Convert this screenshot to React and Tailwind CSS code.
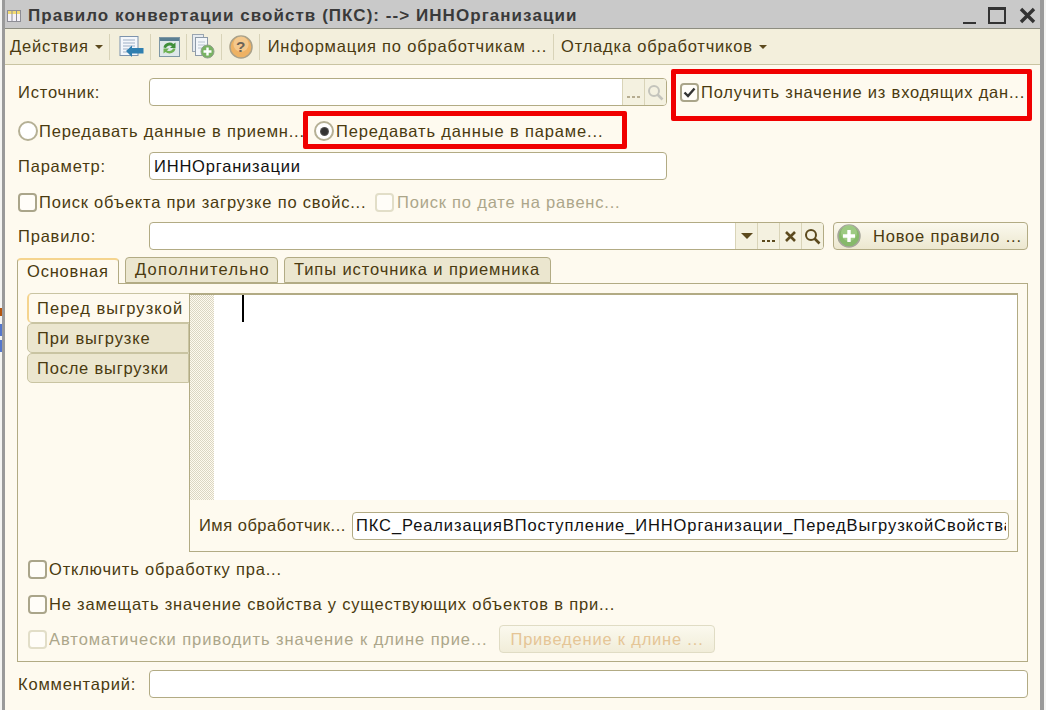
function Sep() {
  return <div className="w-px h-[26px] shrink-0 bg-[#d8d3b8] mx-[6px]"></div>;
}

function Caret({ className = "" }) {
  return <span className={"w-0 h-0 border-x-[4px] border-x-transparent border-t-[4px] border-t-[#5c4a1e] " + className}></span>;
}

function Check({ checked, disabled, className = "" }) {
  return (
    <span className={"w-[19px] h-[19px] shrink-0 rounded-[4px] border-2 bg-[#fffdf8] flex items-center justify-center " + (disabled ? "border-[#e2dec8]" : "border-[#aaa58a]") + " " + className}>
      {checked && (
        <svg width="13" height="11" viewBox="0 0 13 11">
          <path d="M1.5 5.5 L5 9 L11.5 1.5" fill="none" stroke="#333" strokeWidth="2.4" />
        </svg>
      )}
    </span>
  );
}

function Radio({ checked }) {
  return (
    <span className="w-[20px] h-[20px] shrink-0 rounded-full border-2 border-[#b5b095] bg-white flex items-center justify-center">
      {checked && <span className="w-[9px] h-[9px] rounded-full bg-[radial-gradient(circle,#333_45%,#8b8b8b_100%)]"></span>}
    </span>
  );
}

function Field({ className = "", children }) {
  return (
    <div className={"h-[28px] bg-white border border-[#b2ab84] rounded-[4px] flex items-center overflow-hidden " + className}>
      {children}
    </div>
  );
}

function FieldBtn({ children }) {
  return (
    <div className="w-[22px] h-full shrink-0 bg-[#f4f1e0] border-l border-[#d9d4b8] flex items-center justify-center">
      {children}
    </div>
  );
}

function Dots({ light }) {
  return (
    <span className={"flex gap-[2px] mt-[10px] " + (light ? "opacity-40" : "")}>
      <i className="w-[3px] h-[2px] bg-[#5c4a1e]"></i>
      <i className="w-[3px] h-[2px] bg-[#5c4a1e]"></i>
      <i className="w-[3px] h-[2px] bg-[#5c4a1e]"></i>
    </span>
  );
}

function Lens({ color }) {
  return (
    <svg width="17" height="17" viewBox="0 0 17 17">
      <circle cx="7" cy="7" r="5" fill="none" stroke={color} strokeWidth="2" />
      <path d="M10.5 10.5 L15.5 15.5" stroke={color} strokeWidth="2.6" />
    </svg>
  );
}

function GreenPlus({ size }) {
  return (
    <svg width={size} height={size} viewBox="0 0 24 24">
      <circle cx="12" cy="12" r="11" fill="#86b96a" stroke="#a5a59a" strokeWidth="1.5" />
      <circle cx="12" cy="9" r="8" fill="#a7d28d" opacity="0.7" />
      <path d="M12 6 V18 M6 12 H18" stroke="#fff" strokeWidth="3.4" />
    </svg>
  );
}

export default function App() {
  return (
    <div className="relative w-[1046px] h-[710px] flex bg-white overflow-hidden font-['Liberation_Sans',sans-serif] text-[16.5px] tracking-[0.8px] text-[#4a3a10]">
      <div className="w-[2px] shrink-0 bg-[#f4f4f2] flex flex-col">
        <div className="h-[308px]"></div>
        <div className="h-[8px] bg-[#b5560f]"></div>
        <div className="h-[8px]"></div>
        <div className="h-[12px] bg-[#5577cc]"></div>
        <div className="h-[4px]"></div>
        <div className="h-[12px] bg-[#5577cc]"></div>
      </div>
      <div className="w-[3px] shrink-0 bg-[#9a9a9a]"></div>

      <div className="w-[1035px] shrink-0 flex flex-col bg-[#fefaef]">
        <div className="h-[28px] shrink-0 bg-[#c9c9c9] flex items-center pl-[2px] pt-[3px]">
          <svg width="14" height="12" viewBox="0 0 14 12" className="mr-[7px] shrink-0">
            <rect x="0.5" y="0.5" width="13" height="11" fill="#f4f1f8" stroke="#8d8d95" />
            <rect x="1" y="1" width="12" height="3" fill="#f2da72" />
            <path d="M5 1 V11 M9.5 1 V11" stroke="#8d8d95" />
          </svg>
          <span className="text-[17px] font-bold tracking-[1.05px] text-[#3a3a3a] whitespace-nowrap">Правило конвертации свойств (ПКС): --&gt; ИННОрганизации</span>
          <div className="ml-auto flex items-center">
            <span className="w-[13px] h-[2px] bg-[#333] mt-[14px] mr-[12px]"></span>
            <span className="w-[18px] h-[17px] border-2 border-t-[3px] border-[#333] mr-[13px]"></span>
            <svg width="17" height="17" viewBox="0 0 17 17" className="mr-[4px]">
              <path d="M2 2 L15 15 M15 2 L2 15" stroke="#333" strokeWidth="3.4" />
            </svg>
          </div>
        </div>

        <div className="h-[37px] shrink-0 bg-[#f3efdc] border-t border-[#8d8d80] border-b border-b-[#c9c4a2] flex items-center pl-[5px]">
          <span>Действия</span>
          <Caret className="ml-[6px]" />
          <Sep />
          <svg width="25" height="24" viewBox="0 0 25 24" className="ml-[3px] shrink-0">
            <rect x="1" y="1.5" width="18" height="19" fill="#f4f7fb" stroke="#7c93ad" />
            <path d="M4 5 H16 M4 8 H16 M4 11 H16 M4 14 H9 M4 17 H9" stroke="#9db0c6" strokeWidth="1.2" />
            <path d="M24.5 13 V18.5 H13 V22 L7 16 L13 10.5 V13 Z" fill="#2f7fb0" />
          </svg>
          <Sep />
          <svg width="21" height="20" viewBox="0 0 21 20" className="ml-[2px] shrink-0">
            <rect x="0.5" y="0.5" width="20" height="19" fill="#dfe8ea" stroke="#7e97a5" />
            <rect x="1" y="1" width="19" height="3" fill="#5a7f92" />
            <path d="M4.5 10.5 A6 5.5 0 0 1 14.5 7 L16.5 5.5 V11 H11 L13 9 A4 3.5 0 0 0 7 11 Z" fill="#3f8f3a" />
            <path d="M16.5 11.5 A6 5.5 0 0 1 6.5 15 L4.5 16.5 V11.5 H10 L8 13.5 A4 3.5 0 0 0 14 11.5 Z" fill="#6fb255" />
          </svg>
          <Sep />
          <svg width="23" height="25" viewBox="0 0 23 25" className="ml-[-1px] shrink-0">
            <rect x="0.5" y="0.5" width="11" height="17" fill="#e6ebf0" stroke="#9aa5b0" />
            <rect x="3.5" y="3.5" width="12" height="18" fill="#f3f6f9" stroke="#8d9aa8" />
            <path d="M6 8 H13 M6 11 H13 M6 14 H10" stroke="#b8c4d0" />
            <circle cx="15.5" cy="17.5" r="6.5" fill="#79b362" stroke="#8fa08a" />
            <path d="M15.5 13.5 V21.5 M11.5 17.5 H19.5" stroke="#fff" strokeWidth="2.4" />
          </svg>
          <Sep />
          <svg width="24" height="24" viewBox="0 0 25 25" className="ml-[1px] shrink-0">
            <circle cx="12.5" cy="12.5" r="11.5" fill="#eeb264" stroke="#a9a18a" strokeWidth="1.5" />
            <circle cx="12.5" cy="9.5" r="8" fill="#f6d29c" opacity="0.7" />
            <text x="12.5" y="18" textAnchor="middle" fontSize="16" fontWeight="700" fontFamily="Liberation Sans" fill="#6b6358">?</text>
          </svg>
          <Sep />
          <span className="ml-[2px] whitespace-nowrap">Информация по обработчикам ...</span>
          <Sep />
          <span className="ml-[1px] whitespace-nowrap">Отладка обработчиков</span>
          <Caret className="ml-[6px]" />
        </div>

        <div className="flex-1 flex flex-col pl-[13px]">
          <div className="flex items-center mt-[13px] h-[28px]">
            <span className="w-[131px]">Источник:</span>
            <Field className="w-[518px] justify-end">
              <FieldBtn><Dots light /></FieldBtn>
              <FieldBtn><Lens color="#c4c4bc" /></FieldBtn>
            </Field>
            <Check checked className="ml-[13px]" />
            <span className="ml-[2px] whitespace-nowrap">Получить значение из входящих дан...</span>
          </div>

          <div className="flex items-center mt-[14px] h-[22px]">
            <Radio />
            <span className="ml-px w-[275px] whitespace-nowrap overflow-hidden">Передавать данные в приемн...</span>
            <Radio checked />
            <span className="ml-[2px] tracking-[0.85px] whitespace-nowrap">Передавать данные в параме...</span>
          </div>

          <div className="flex items-center mt-[10px] h-[28px]">
            <span className="w-[131px]">Параметр:</span>
            <Field className="w-[518px] pl-[4px] text-[#111]">ИННОрганизации</Field>
          </div>

          <div className="flex items-center mt-[12px] h-[20px]">
            <Check />
            <span className="ml-[2px] w-[336px] whitespace-nowrap">Поиск объекта при загрузке по свойс...</span>
            <Check disabled />
            <span className="ml-[3px] text-[#aca68a] whitespace-nowrap">Поиск по дате на равенс...</span>
          </div>

          <div className="flex items-center mt-[10px] h-[28px]">
            <span className="w-[131px]">Правило:</span>
            <Field className="w-[675px] justify-end">
              <FieldBtn><Caret className="!border-x-[6px] !border-t-[6px]" /></FieldBtn>
              <FieldBtn><Dots /></FieldBtn>
              <FieldBtn>
                <svg width="13" height="13" viewBox="0 0 13 13"><path d="M2 2 L11 11 M11 2 L2 11" stroke="#5c4a1e" strokeWidth="2.6" /></svg>
              </FieldBtn>
              <FieldBtn><Lens color="#5c4a1e" /></FieldBtn>
            </Field>
            <div className="ml-[9px] w-[195px] h-[28px] rounded-[4px] border border-[#b2ab84] bg-gradient-to-b from-[#fbf9ee] to-[#ece7cf] flex items-center pl-[3px]">
              <GreenPlus size={24} />
              <span className="ml-[12px] whitespace-nowrap">Новое правило ...</span>
            </div>
          </div>

          <div className="flex items-end mt-[7px] h-[26px] -ml-[1px]">
            <div className="w-[102px] h-[26px] mb-[-1px] pb-[2px] z-10 rounded-t-[4px] border border-b-0 border-[#b2ab84] border-t-2 border-t-[#f5d48e] bg-[#fefaef] pl-[9px] flex items-center">Основная</div>
            <div className="ml-[6px] w-[153px] h-[26px] pb-[2px] rounded-t-[4px] border border-[#b2ab84] bg-[#ebe6cf] pl-[9px] flex items-center tracking-[1.25px] whitespace-nowrap">Дополнительно</div>
            <div className="ml-[6px] w-[267px] h-[26px] pb-[2px] rounded-t-[4px] border border-[#b2ab84] bg-[#ebe6cf] pl-[9px] flex items-center tracking-[0.9px] whitespace-nowrap">Типы источника и приемника</div>
          </div>

          <div className="-ml-[1px] w-[1011px] h-[379px] shrink-0 border border-[#b2ab84] pt-[9px] pl-[9px] flex flex-col">
            <div className="flex h-[259px]">
              <div className="w-[162px] shrink-0 flex flex-col">
                <div className="h-[30px] pt-[1px] rounded-l-[5px] border border-r-0 border-[#c9c4a2] border-l-2 border-l-[#f5d48e] bg-[#fefaef] pl-[8px] flex items-center tracking-[1.05px] whitespace-nowrap z-10">Перед выгрузкой</div>
                <div className="h-[30px] pt-[1px] rounded-l-[5px] border border-[#c9c4a2] bg-[#ebe6cf] pl-[9px] flex items-center tracking-[0.9px]">При выгрузке</div>
                <div className="h-[30px] pt-[1px] rounded-l-[5px] border border-[#c9c4a2] bg-[#ebe6cf] pl-[9px] flex items-center">После выгрузки</div>
              </div>
              <div className="w-[829px] border border-[#b2ab84] border-t-2 flex flex-col">
                <div className="h-[205px] flex">
                  <div className="w-[24px] shrink-0 bg-[repeating-conic-gradient(#dad6c3_0_25%,#fefaef_0_50%)] bg-[length:2px_2px]"></div>
                  <div className="flex-1 bg-white pl-[28px]">
                    <div className="w-[2px] h-[27px] bg-black"></div>
                  </div>
                </div>
                <div className="flex-1 flex items-center pl-[9px]">
                  <span className="w-[153px] whitespace-nowrap overflow-hidden tracking-[0.5px]">Имя обработчик...</span>
                  <Field className="w-[657px] pl-[3px] pr-[2px] text-[#111]">
                    <span className="block overflow-hidden whitespace-nowrap tracking-[0.9px]">ПКС_РеализацияВПоступление_ИННОрганизации_ПередВыгрузкойСвойства</span>
                  </Field>
                </div>
              </div>
            </div>

            <div className="flex items-center mt-[7px] h-[20px] ml-[1px]">
              <Check />
              <span className="ml-[2px]">Отключить обработку пра...</span>
            </div>
            <div className="flex items-center mt-[15px] h-[20px] ml-[1px]">
              <Check />
              <span className="ml-[2px] whitespace-nowrap">Не замещать значение свойства у существующих объектов в при...</span>
            </div>
            <div className="flex items-center mt-[11px] h-[28px] ml-[1px]">
              <Check disabled />
              <span className="ml-[2px] w-[450px] text-[#aca68a] tracking-[0.95px] whitespace-nowrap overflow-hidden">Автоматически приводить значение к длине прие...</span>
              <div className="w-[216px] h-[28px] rounded-[4px] border border-[#e0dcc4] bg-gradient-to-b from-[#fbf9ee] to-[#f1edd9] text-[#e5c596] flex items-center justify-center whitespace-nowrap">Приведение к длине ...</div>
            </div>
          </div>

          <div className="flex items-center mt-[8px] h-[28px]">
            <span className="w-[131px]">Комментарий:</span>
            <Field className="w-[879px]"></Field>
          </div>
        </div>
      </div>

      <div className="w-[4px] shrink-0 bg-[#9a9a9a]"></div>
      <div className="flex-1 bg-[#f4f4f2]"></div>

      {/* красные рамки поверх формы */}
      <div className="absolute left-[671px] top-[69px] w-[361px] h-[52px] border-[5px] border-[#f00000] rounded-[2px]"></div>
      <div className="absolute left-[303px] top-[111px] w-[324px] h-[38px] border-[5px] border-[#f00000] rounded-[2px]"></div>
    </div>
  );
}
